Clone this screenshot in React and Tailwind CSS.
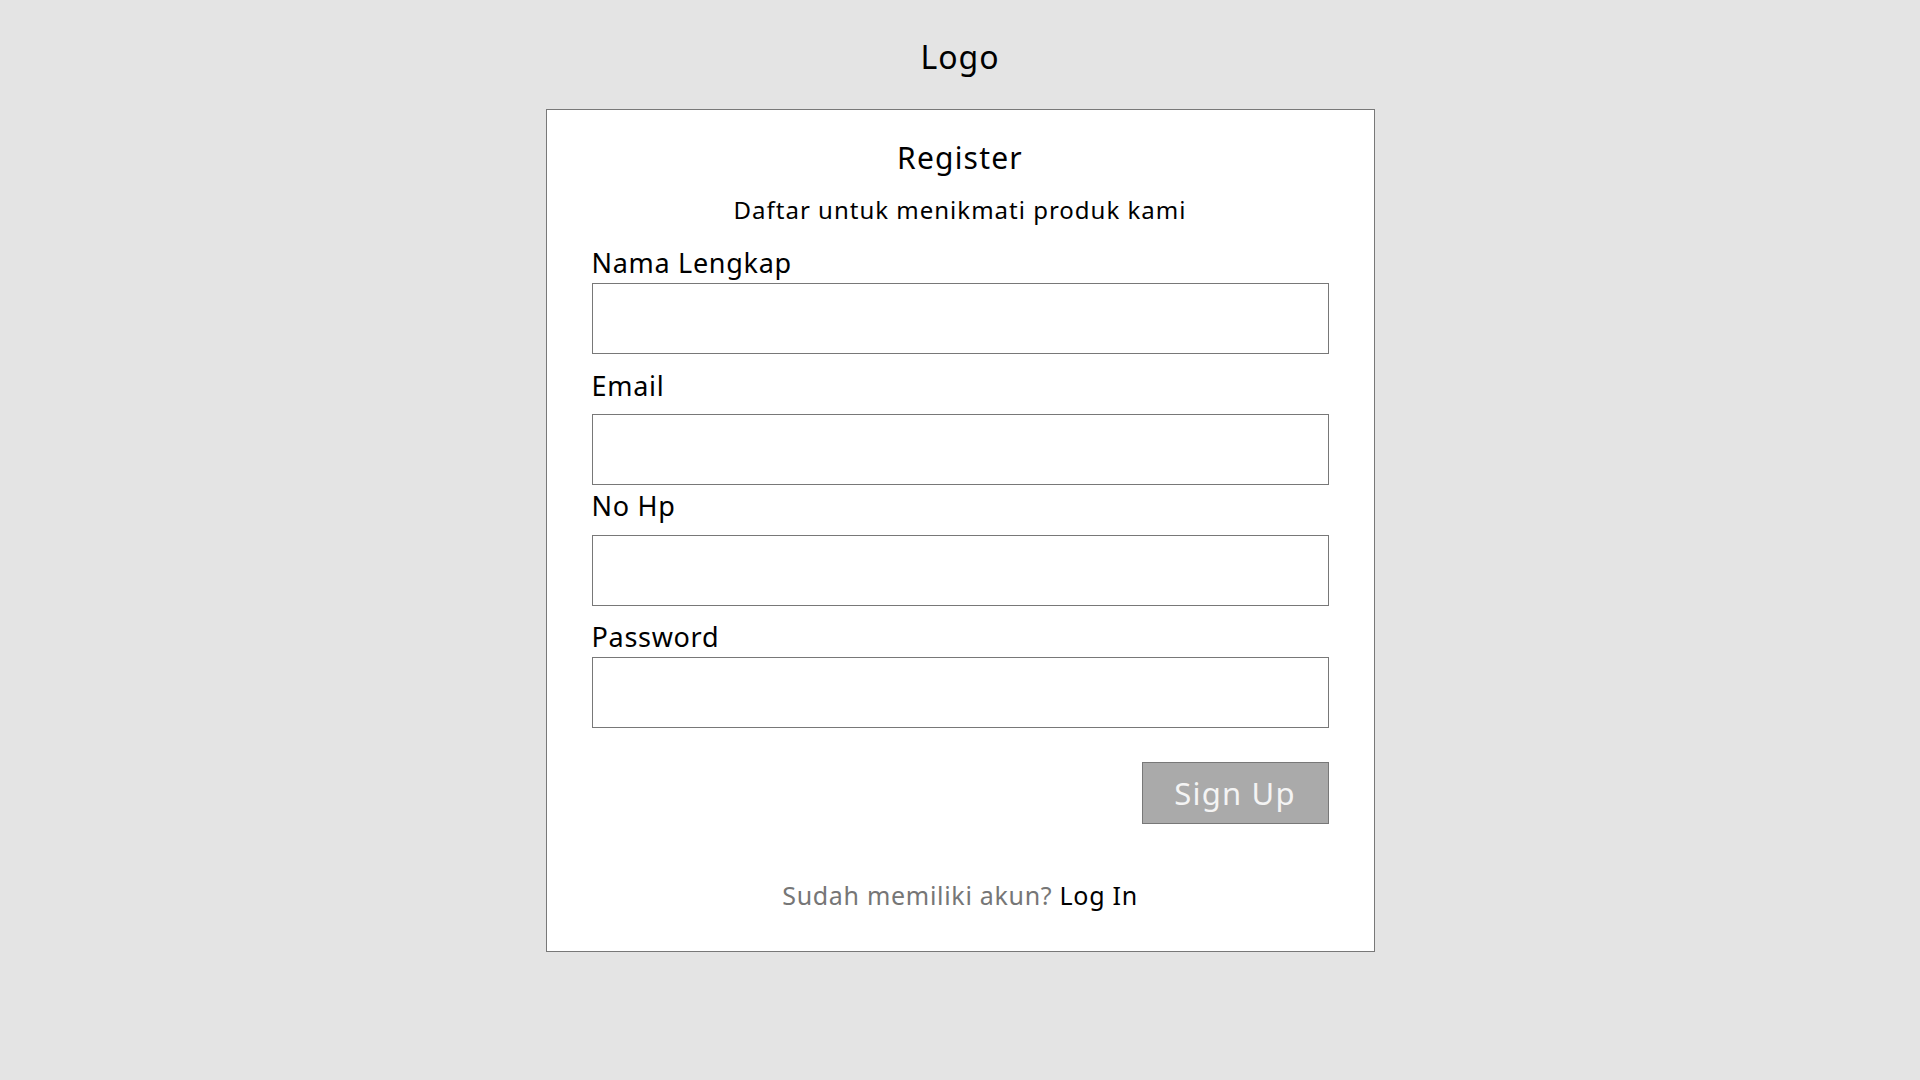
const fields = [
  { label: "Nama Lengkap", labelMt: "mt-[21px]", inputMt: "mt-[4px]" },
  { label: "Email", labelMt: "mt-[16px]", inputMt: "mt-[12px]" },
  { label: "No Hp", labelMt: "mt-[5px]", inputMt: "mt-[13px]" },
  { label: "Password", labelMt: "mt-[15px]", inputMt: "mt-[4px]" },
];

export default function App() {
  return (
    <div
      className="min-h-screen w-full bg-[#e4e4e4] flex flex-col items-center pt-[37px] text-black"
      style={{ fontFamily: '"Noto Sans", "Open Sans", sans-serif' }}
    >
      <h1 className="text-[32px] leading-[40px] font-normal tracking-[1px]">Logo</h1>

      <div className="mt-[32px] w-[829px] bg-white border border-[#787878] px-[45px] pt-[30px] pb-[40px] flex flex-col">
        <h2 className="text-center text-[30px] leading-[36px] tracking-[1.2px]">Register</h2>
        <p className="mt-[18px] text-center text-[24px] leading-[32px] tracking-[1px]">
          Daftar untuk menikmati produk kami
        </p>

        {fields.map((f) => (
          <div key={f.label} className="flex flex-col">
            <label className={`${f.labelMt} text-[27px] leading-[32px] tracking-[0.7px]`}>{f.label}</label>
            <input
              type={f.label === "Password" ? "password" : "text"}
              className={`${f.inputMt} h-[71px] w-full border border-[#787878] bg-white outline-none px-3 text-[22px]`}
            />
          </div>
        ))}

        <div className="mt-[34px] flex justify-end">
          <button className="h-[62px] w-[187px] bg-[#aaaaaa] border border-[#787878] text-[#f4f4f4] text-[31px] leading-none tracking-[1.2px]">
            Sign Up
          </button>
        </div>

        <p className="mt-[55px] text-center text-[25px] leading-[32px] tracking-[0.7px]">
          <span className="text-[#767676]">Sudah memiliki akun? </span>
          <a className="text-black">Log In</a>
        </p>
      </div>
    </div>
  );
}
